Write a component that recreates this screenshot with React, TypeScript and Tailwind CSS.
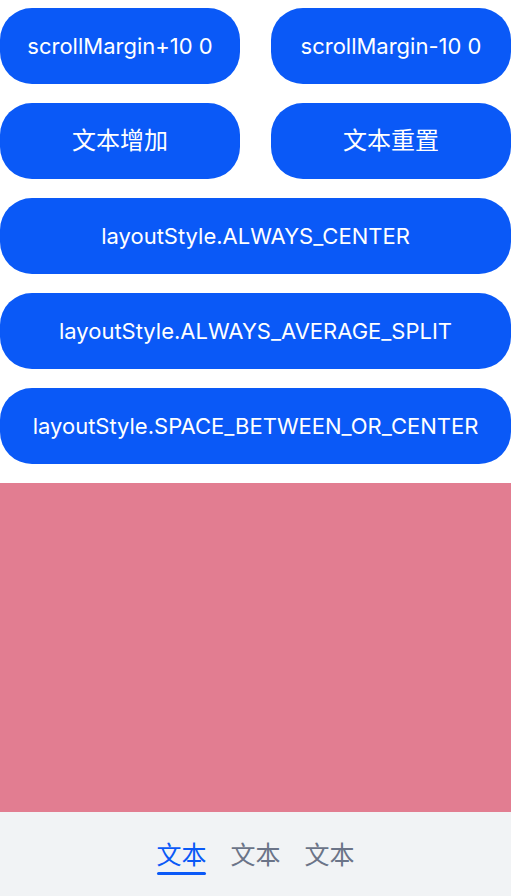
const FONT = "font-['Inter','Noto_Sans_CJK_SC',sans-serif]";

function Btn({ label, className = "" }: { label: string; className?: string }) {
  return (
    <button
      className={`h-[76px] rounded-[32px] bg-[#0a59f7] text-white flex items-center justify-center ${className}`}
    >
      {label}
    </button>
  );
}

export default function App() {
  return (
    <div className={`w-[511px] h-[896px] bg-white flex flex-col ${FONT}`}>
      <div className="flex flex-col gap-[19px] pt-[8px]">
        <div className="flex justify-between">
          <Btn label="scrollMargin+10 0" className="w-[240px] text-[22px]" />
          <Btn label="scrollMargin-10 0" className="w-[240px] text-[22px]" />
        </div>
        <div className="flex justify-between">
          <Btn label="文本增加" className="w-[240px] text-[24px]" />
          <Btn label="文本重置" className="w-[240px] text-[24px]" />
        </div>
        <Btn label="layoutStyle.ALWAYS_CENTER" className="w-full text-[22px]" />
        <Btn label="layoutStyle.ALWAYS_AVERAGE_SPLIT" className="w-full text-[22px]" />
        <Btn label="layoutStyle.SPACE_BETWEEN_OR_CENTER" className="w-full text-[22px]" />
      </div>

      <div className="mt-[19px] flex-1 bg-[#e27d91]" />

      <div className="h-[84px] bg-[#f1f3f5] flex items-center justify-center gap-[24px] pt-[6px]">
        <div className="flex flex-col items-center">
          <span className="text-[25px] leading-[30px] text-[#0a59f7]">文本</span>
          <div className="w-[49px] h-[3px] bg-[#0a59f7] rounded-full mt-[2px]" />
        </div>
        <div className="flex flex-col items-center">
          <span className="text-[25px] leading-[30px] text-[#6b7488]">文本</span>
          <div className="w-[49px] h-[3px] mt-[2px]" />
        </div>
        <div className="flex flex-col items-center">
          <span className="text-[25px] leading-[30px] text-[#6b7488]">文本</span>
          <div className="w-[49px] h-[3px] mt-[2px]" />
        </div>
      </div>
    </div>
  );
}
